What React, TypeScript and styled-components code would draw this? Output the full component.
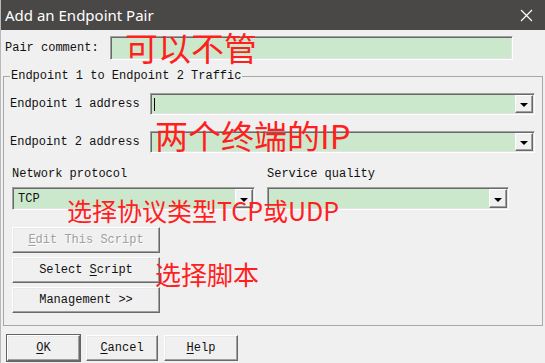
import styled, { createGlobalStyle } from 'styled-components'

const GlobalStyle = createGlobalStyle`
    html, body {
        margin: 0;
        padding: 0;
        background: #f0f0f0;
        overflow: hidden;
    }
    * {
        box-sizing: border-box;
    }
`

const Ventana = styled.div`
    position: relative;
    width: 545px;
    height: 363px;
    overflow: hidden;
    background: #f0f0f0;
    border-left: 1px solid #b9b9b9;
    font-family: "Liberation Mono", "DejaVu Sans Mono", monospace;
    font-size: 12px;
    color: #111;
`

const BarraTitulo = styled.div`
    display: flex;
    align-items: center;
    justify-content: space-between;
    height: 30px;
    padding: 0 12px 0 4px;
    background: #4a4846;
    color: #fff;
    font-family: "Noto Sans", "Liberation Sans", sans-serif;
    font-size: 15px;
`

const FilaComentario = styled.div`
    display: flex;
    align-items: center;
    margin-top: 6px;
    padding-left: 4px;
`

const Etiqueta = styled.span<{ $ancho?: number }>`
    display: inline-block;
    width: ${p => (p.$ancho ? `${p.$ancho}px` : 'auto')};
    line-height: 14px;
    white-space: pre;
`

const Campo = styled.div<{ $ancho?: number; $alto?: number }>`
    display: flex;
    align-items: center;
    width: ${p => (p.$ancho ? `${p.$ancho}px` : 'auto')};
    flex: ${p => (p.$ancho ? 'none' : '1')};
    height: ${p => p.$alto ?? 22}px;
    padding: 1px;
    background: #cce8cc;
    border: 1px solid;
    border-color: #a0a0a0 #fff #fff #a0a0a0;
    box-shadow: inset 1px 1px #696969, inset -1px -1px #e3e3e3;
`

const TextoCampo = styled.span`
    flex: 1;
    padding-left: 4px;
    line-height: 14px;
`

const Cursor = styled.span`
    display: block;
    width: 1px;
    height: 13px;
    margin-left: 2px;
    background: #000;
`

const BotonFlecha = styled.div`
    display: flex;
    align-items: center;
    justify-content: center;
    width: 18px;
    height: 100%;
    background: #f0f0f0;
    border: 1px solid;
    border-color: #fff #696969 #696969 #fff;
    box-shadow: inset -1px -1px #a0a0a0;
    &::after {
        content: "";
        border-left: 4px solid transparent;
        border-right: 4px solid transparent;
        border-top: 4px solid #000;
        margin-top: 2px;
    }
`

const Grupo = styled.fieldset`
    margin: 9px 0 0 2px;
    width: 540px;
    padding: 10px 7px 12px 6px;
    border: 1px solid #a8a8a8;
    min-inline-size: 0;
`

const Leyenda = styled.legend`
    margin-left: 0;
    padding: 0 1px;
    line-height: 14px;
`

const FilaEndpoint = styled.div<{ $arriba?: number }>`
    display: flex;
    align-items: center;
    margin-top: ${p => p.$arriba ?? 0}px;
`

const Rejilla = styled.div`
    display: grid;
    grid-template-columns: 243px 242px;
    column-gap: 12px;
    row-gap: 6px;
    margin: 14px 0 0 2px;
`

const Botonera = styled.div`
    display: flex;
    flex-direction: column;
    gap: 4px;
    margin: 17px 0 0 2px;
`

const Boton = styled.button<{ $ancho: number; $predeterminado?: boolean; $inactivo?: boolean }>`
    width: ${p => p.$ancho}px;
    height: 26px;
    padding: 0;
    background: #f0f0f0;
    font-family: "Liberation Mono", "DejaVu Sans Mono", monospace;
    font-size: 12px;
    color: ${p => (p.$inactivo ? '#a0a0a0' : '#111')};
    text-shadow: ${p => (p.$inactivo ? '1px 1px #fff' : 'none')};
    border: 1px solid;
    border-color: #fff #696969 #696969 #fff;
    box-shadow: inset -1px -1px #a0a0a0, inset 1px 1px #e8e8e8
        ${p => (p.$predeterminado ? ', 0 0 0 1px #646464' : '')};
    u {
        text-decoration: underline;
        text-underline-offset: 2px;
    }
`

const PieBotones = styled.div`
    display: flex;
    gap: 6px;
    margin: 9px 0 0 6px;
`

const Nota = styled.div<{ $x: number; $y: number; $tam: number }>`
    position: absolute;
    left: ${p => p.$x}px;
    top: ${p => p.$y}px;
    font-family: "Noto Sans CJK SC", "Noto Sans", sans-serif;
    font-size: ${p => p.$tam}px;
    line-height: 1;
    color: #ff1f1f;
    white-space: nowrap;
    pointer-events: none;
`

function Cerrar() {
    return (
        <svg width="13" height="13" viewBox="0 0 13 13">
            <path d="M1 1 L12 12 M12 1 L1 12" stroke="#fff" strokeWidth="1.2" />
        </svg>
    )
}

function App() {
    return (
        <>
            <GlobalStyle />
            <Ventana>
                <BarraTitulo>
                    <span>Add an Endpoint Pair</span>
                    <Cerrar />
                </BarraTitulo>

                <FilaComentario>
                    <Etiqueta $ancho={105}>Pair comment:</Etiqueta>
                    <Campo $ancho={403} $alto={24} />
                </FilaComentario>

                <Grupo>
                    <Leyenda>Endpoint 1 to Endpoint 2 Traffic</Leyenda>
                    <FilaEndpoint>
                        <Etiqueta $ancho={140}>Endpoint 1 address</Etiqueta>
                        <Campo>
                            <Cursor />
                            <TextoCampo />
                            <BotonFlecha />
                        </Campo>
                    </FilaEndpoint>
                    <FilaEndpoint $arriba={16}>
                        <Etiqueta $ancho={140}>Endpoint 2 address</Etiqueta>
                        <Campo>
                            <TextoCampo />
                            <BotonFlecha />
                        </Campo>
                    </FilaEndpoint>

                    <Rejilla>
                        <Etiqueta>Network protocol</Etiqueta>
                        <Etiqueta>Service quality</Etiqueta>
                        <Campo $alto={23}>
                            <TextoCampo>TCP</TextoCampo>
                            <BotonFlecha />
                        </Campo>
                        <Campo $alto={23}>
                            <TextoCampo />
                            <BotonFlecha />
                        </Campo>
                    </Rejilla>

                    <Botonera>
                        <Boton $ancho={148} $inactivo><u>E</u>dit This Script</Boton>
                        <Boton $ancho={148}>Select <u>S</u>cript</Boton>
                        <Boton $ancho={148}>Management &gt;&gt;</Boton>
                    </Botonera>
                </Grupo>

                <PieBotones>
                    <Boton $ancho={73} $predeterminado><u>O</u>K</Boton>
                    <Boton $ancho={72}><u>C</u>ancel</Boton>
                    <Boton $ancho={74}><u>H</u>elp</Boton>
                </PieBotones>

                <Nota $x={124} $y={31} $tam={33}>可以不管</Nota>
                <Nota $x={154} $y={119} $tam={33}>两个终端的IP</Nota>
                <Nota $x={66} $y={198} $tam={25}>选择协议类型TCP或UDP</Nota>
                <Nota $x={154} $y={261} $tam={26}>选择脚本</Nota>
            </Ventana>
        </>
    )
}

export default App
